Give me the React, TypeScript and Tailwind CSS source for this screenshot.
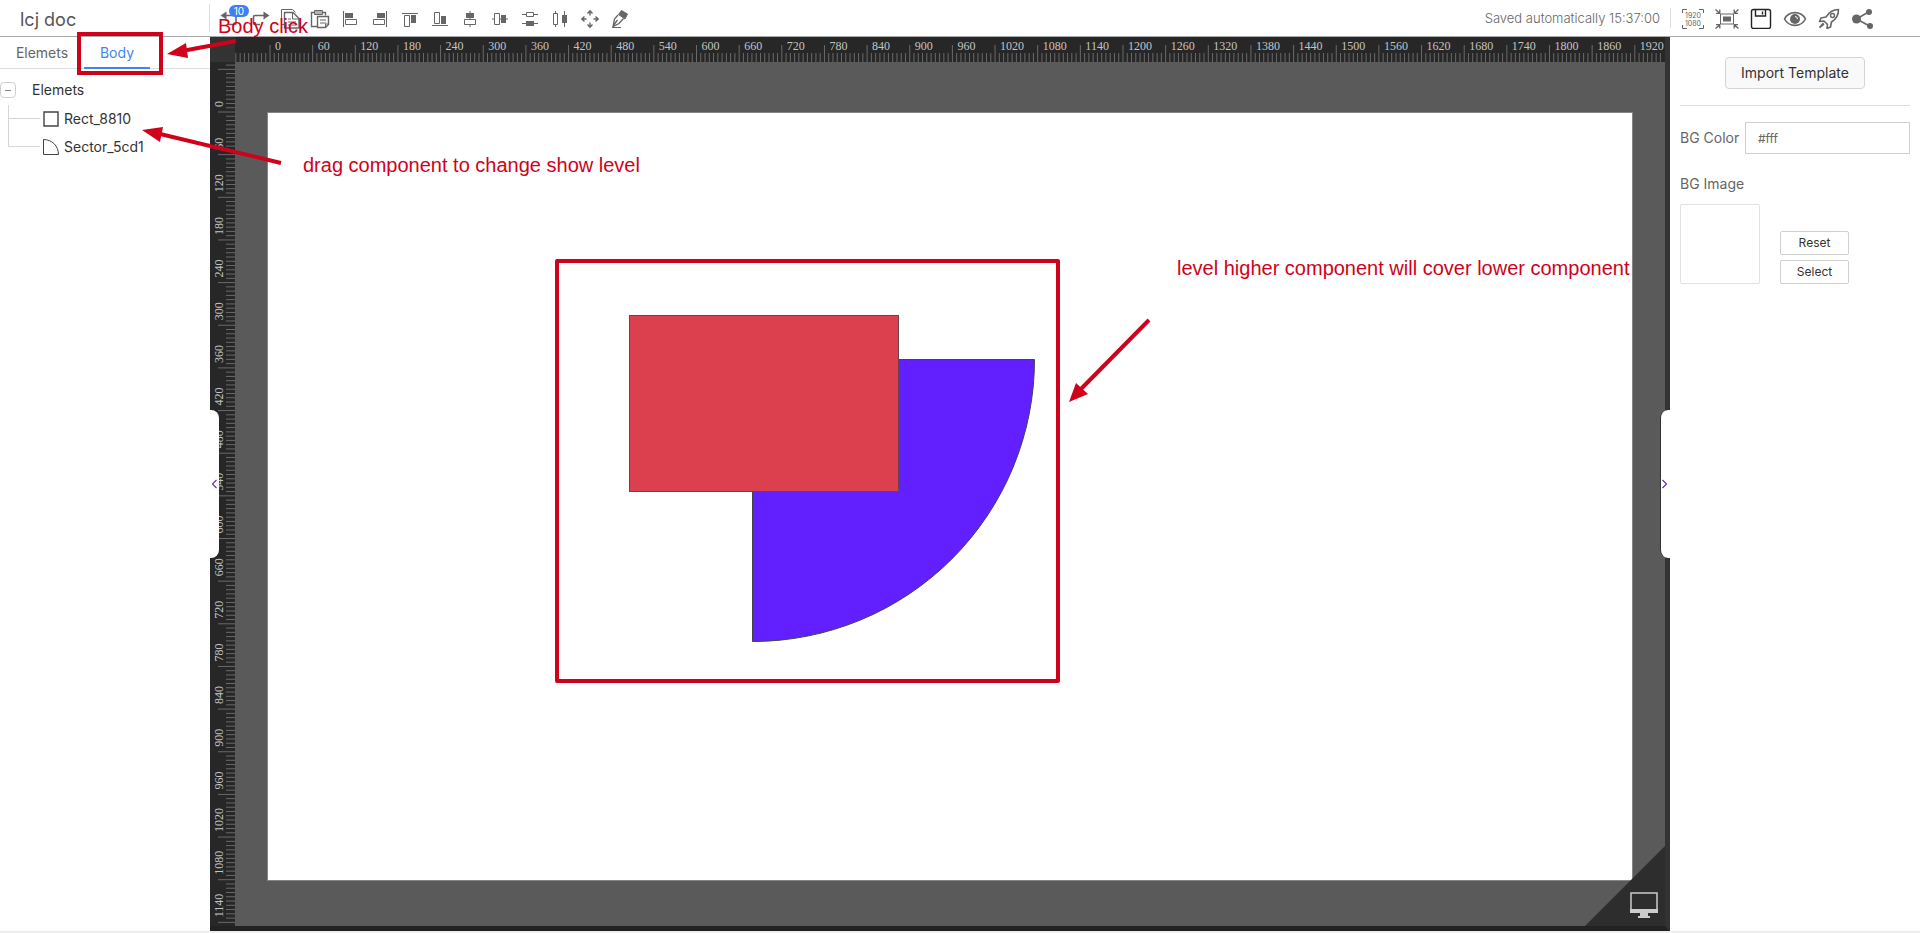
import type { ReactNode } from "react";
import { clsx } from "clsx";

const UNIT = 60;
const STEP = 42.65;

type IconProps = { children: ReactNode };

function Icon({ children }: IconProps) {
  return (
    <svg
      viewBox="0 0 24 24"
      className="w-6 h-6 text-[#666]"
      fill="none"
      stroke="currentColor"
      aria-hidden="true"
    >
      {children}
    </svg>
  );
}

const tools = [
  {
    label: "Undo",
    icon: (
      <>
        <path d="M7 9.500h9.500q1.500 0 1.500 1.500v6q0 1.500-1.500 1.500H10" strokeWidth="1.600" />
        <path d="M8.500 5.500v8L2.500 9.500z" fill="currentColor" stroke="none" />
      </>
    ),
  },
  {
    label: "Redo",
    icon: (
      <>
        <path d="M17 9.500H7Q5.500 9.500 5.500 11v6q0 1.500 1.500 1.500h5" strokeWidth="1.600" />
        <path d="M15.500 5.500v8l6-4z" fill="currentColor" stroke="none" />
      </>
    ),
  },
  {
    label: "Copy",
    icon: (
      <>
        <path d="M6 18.500H3.500V3.500h11l3 3" />
        <path d="M6.500 6.500h8.500l6 6v9.500H6.500z" strokeWidth="1.400" />
        <path d="M14.500 6.500v6.500H21M10 13h3M10 16h8M10 19h8" />
      </>
    ),
  },
  {
    label: "Paste",
    icon: (
      <>
        <path d="M9.500 20.500h-6v-14h3M14.500 6.500h3v3" strokeWidth="1.400" />
        <path d="M6.500 4.500h8v4h-8z" fill="currentColor" fillOpacity="0.500" />
        <path d="M9.500 10.500h11v8l-3 3h-8z" strokeWidth="1.400" />
        <path d="M12 14h6M12 17h6M17.500 21v-3h3" />
      </>
    ),
  },
  {
    label: "Align left",
    icon: (
      <>
        <path d="M5.500 5v16M7.500 13.500h11v5h-11z" />
        <path d="M7 7h8v5H7z" fill="currentColor" stroke="none" />
      </>
    ),
  },
  {
    label: "Align right",
    icon: (
      <>
        <path d="M18.500 5v16M5.500 13.500h11v5h-11z" />
        <path d="M9 7h8v5H9z" fill="currentColor" stroke="none" />
      </>
    ),
  },
  {
    label: "Align top",
    icon: (
      <>
        <path d="M4 7.500h16M6.500 9.500h5v11h-5z" />
        <path d="M13 9h5v8h-5z" fill="currentColor" stroke="none" />
      </>
    ),
  },
  {
    label: "Align bottom",
    icon: (
      <>
        <path d="M4 19.500h16M6.500 6.500h5v11h-5z" />
        <path d="M13 10h5v8h-5z" fill="currentColor" stroke="none" />
      </>
    ),
  },
  {
    label: "Center horizontally",
    icon: (
      <>
        <path d="M12 5v8M12 18v3M6.500 13.500h11v5h-11z" />
        <path d="M8 7h8v5H8z" fill="currentColor" stroke="none" />
      </>
    ),
  },
  {
    label: "Center vertically",
    icon: (
      <>
        <path d="M4 13h2M11 13h9M6.500 7.500h5v11h-5z" />
        <path d="M13 9h5v8h-5z" fill="currentColor" stroke="none" />
      </>
    ),
  },
  {
    label: "Distribute vertically",
    icon: (
      <>
        <path d="M4 8.500h4M16 8.500h4M4 17.500h16M8.500 6.500h7v4h-7z" />
        <path d="M8 15h8v5H8z" fill="currentColor" stroke="none" />
      </>
    ),
  },
  {
    label: "Distribute horizontally",
    icon: (
      <>
        <path d="M7.500 5v2M7.500 19v2M5.500 7.500h4v11h-4zM16.500 5v16" />
        <path d="M14 9h5v8h-5z" fill="currentColor" stroke="none" />
      </>
    ),
  },
  {
    label: "Move",
    icon: (
      <path
        d="M12 5v4.500M12 16.500V21M4 13h4.500M15.500 13H20M9.500 7.500L12 4.800l2.500 2.700M9.500 18.500l2.500 2.700 2.500-2.700M6.500 10.500L3.800 13l2.700 2.500M17.500 10.500l2.700 2.500-2.700 2.500"
        strokeWidth="1.400"
      />
    ),
  },
  {
    label: "Format painter",
    icon: (
      <>
        <path d="M13.500 4.500l6 3.500-2.500 5-6.500-4.500z" fill="currentColor" />
        <path d="M10 9l-3.500 4-1.500 7.500 6-3 4.500-5M5 20l4.500-6" strokeWidth="1.300" />
        <path d="M4 21.500h9" />
      </>
    ),
  },
];

const actions = [
  {
    label: "Actual size",
    icon: (
      <>
        <path d="M1.500 8V4.500H6M18 4.500h4.500V8M1.500 20v3.500H6M18 23.500h4.500V20" />
        <text
          x="12"
          y="13"
          textAnchor="middle"
          fontSize="7"
          fill="currentColor"
          stroke="none"
        >
          1920
        </text>
        <text
          x="12"
          y="21"
          textAnchor="middle"
          fontSize="7"
          fill="currentColor"
          stroke="none"
        >
          1080
        </text>
      </>
    ),
  },
  {
    label: "Fit screen",
    icon: (
      <>
        <path d="M5.500 9h13v10h-13z" />
        <path d="M8 11.500h8v5H8z" fill="currentColor" stroke="none" />
        <path
          d="M.5 4.500l4 3.500M23.500 4.500l-4 3.500M.5 23.500l4-3.500M23.500 23.500l-4-3.500M4.800 4.500v3.800H1M19.200 4.500v3.800H23M4.800 23.500v-3.800H1M19.200 23.500v-3.800H23"
          strokeWidth="1.300"
        />
      </>
    ),
  },
  {
    label: "Save",
    icon: (
      <>
        <rect
          x="2.500"
          y="4.500"
          width="19"
          height="19"
          rx="2"
          className="text-[#222]"
          stroke="currentColor"
          strokeWidth="1.400"
        />
        <path
          d="M6.500 4.500v6.500h10V4.500M13.500 6.500v3"
          className="text-[#222]"
          stroke="currentColor"
          strokeWidth="1.400"
        />
      </>
    ),
  },
  {
    label: "Preview",
    icon: (
      <>
        <path d="M1.500 14C6 5.500 18 5.500 22.500 14 18 22.500 6 22.500 1.500 14z" strokeWidth="1.600" />
        <circle cx="12" cy="14" r="5" fill="currentColor" stroke="none" />
        <path d="M12 11.500a2.500 2.500 0 012.500 2.500" stroke="#fff" />
      </>
    ),
  },
  {
    label: "Publish",
    icon: (
      <>
        <path
          d="M21.500 4.500c-6 .2-9.500 2.500-12.500 7.500l-5 1-1.500 3.500 4.500-.5 3.500 3.500-.5 4 3.500-1.500 1-5c5-3 7-7 7-12.500z"
          strokeWidth="1.600"
          strokeLinejoin="round"
        />
        <circle cx="15.500" cy="10.500" r="2" strokeWidth="1.400" />
        <path d="M6.500 18l-4 4.500 4.500-3.500" strokeWidth="1.600" />
      </>
    ),
  },
  {
    label: "Share",
    icon: (
      <>
        <path d="M17.500 7L5.500 14l13 7" strokeWidth="1.600" />
        <circle cx="5.500" cy="14" r="4.500" fill="currentColor" stroke="none" />
        <circle cx="18" cy="7" r="3" fill="currentColor" stroke="none" />
        <circle cx="19" cy="21" r="3" fill="currentColor" stroke="none" />
      </>
    ),
  },
];

function Header() {
  return (
    <header className="flex h-[37px] shrink-0 items-center border-b border-[#aaa] bg-white">
      <h1 className="flex h-7 w-[210px] items-center border-r border-[#ddd] pl-5 pt-1 text-lg text-[#555]">
        lcj doc
      </h1>
      <div className="flex pl-[5px]">
        {tools.map((tool) => (
          <button
            key={tool.label}
            aria-label={tool.label}
            className="relative flex w-[30px] justify-center"
          >
            <Icon>{tool.icon}</Icon>
            {tool.label === "Undo" && (
              <span className="absolute -top-px left-3.5 flex h-3 w-5 items-center justify-center rounded-full bg-[#3f7ff5] text-[10px] text-white">
                10
              </span>
            )}
          </button>
        ))}
      </div>
      <div className="ml-auto flex items-center">
        <span className="pr-2.5 pt-0.5 text-[13px] font-light text-[#666]">
          Saved automatically 15:37:00
        </span>
        <div className="flex h-5 w-[250px] items-center border-l border-[#ddd] pl-[5px]">
          {actions.map((action) => (
            <button
              key={action.label}
              aria-label={action.label}
              className="flex w-[34px] justify-center pb-0.5"
            >
              <Icon>{action.icon}</Icon>
            </button>
          ))}
        </div>
      </div>
    </header>
  );
}

type TreeItemProps = { label: string; last?: boolean; children: ReactNode };

function TreeItem({ label, last, children }: TreeItemProps) {
  return (
    <li className="flex h-7 items-center">
      <span
        className={clsx(
          "ml-2 w-8 border-l border-[#d5d5d5]",
          last ? "h-3.5 self-start border-b" : "h-7"
        )}
      >
        {!last && <span className="block h-3.5 border-b border-[#d5d5d5]" />}
      </span>
      <svg
        viewBox="0 0 18 18"
        className="ml-0.5 h-[18px] w-[18px]"
        fill="none"
        stroke="#444"
        aria-hidden="true"
      >
        {children}
      </svg>
      <span className="ml-1">{label}</span>
    </li>
  );
}

function ElementPanel() {
  return (
    <aside className="w-[210px] shrink-0 bg-white text-sm text-[#333]">
      <div role="tablist" className="flex h-8 border-b border-[#ddd] text-[#666]">
        <button role="tab" aria-selected="false" className="w-[84px]">
          Elemets
        </button>
        <button
          role="tab"
          aria-selected="true"
          className="-mb-px w-[66px] border-b-2 border-[#3f84f0] pt-px text-[#3f84f0]"
        >
          Body
        </button>
      </div>
      <div className="pt-[7px]">
        <div className="flex h-7 items-center">
          <button
            aria-label="Collapse"
            className="flex h-4 w-4 items-center justify-center rounded-sm border border-[#d0d0d0]"
          >
            <span className="h-px w-1.5 bg-[#888]" />
          </button>
          <span className="ml-4">Elemets</span>
        </div>
        <ul className="pt-px">
          <TreeItem label="Rect_8810">
            <path d="M2 2h14v14H2z" strokeWidth="1.400" />
          </TreeItem>
          <TreeItem label="Sector_5cd1" last>
            <path d="M1.500 1.500v15h15C16.500 8 10 1.500 1.500 1.500z" />
          </TreeItem>
        </ul>
      </div>
    </aside>
  );
}

function range(from: number, to: number) {
  return Array.from({ length: to - from + 1 }, (_, i) => from + i);
}

// tick 0 sits at `origin` px from the start of the ruler
function TopRuler() {
  const origin = 35;
  return (
    <svg
      className="h-[25px] w-full bg-[#272727] font-['Liberation_Serif',serif] text-xs"
      aria-hidden="true"
    >
      {range(-8, 326).map((i) => {
        const major = i % 10 === 0;
        const x = origin + (i * STEP) / 10;
        return <line key={i} x1={x} x2={x} y1={major ? 8 : 16} y2="25" stroke="#6a6a6a" />;
      })}
      {range(0, 32).map((i) => (
        <text key={i} x={origin + i * STEP + 5} y="13" fill="#c4c4c4">
          {i * UNIT}
        </text>
      ))}
    </svg>
  );
}

function LeftRuler() {
  const origin = 50;
  return (
    <svg
      className="h-full w-[25px] bg-[#272727] font-['Liberation_Serif',serif] text-xs"
      aria-hidden="true"
    >
      {range(-11, 202).map((i) => {
        const major = i % 10 === 0;
        const y = origin + (i * STEP) / 10;
        return <line key={i} x1={major ? 8 : 16} x2="25" y1={y} y2={y} stroke="#6a6a6a" />;
      })}
      {range(0, 19).map((i) => (
        <text
          key={i}
          transform={`translate(13 ${origin + i * STEP - 5}) rotate(-90)`}
          fill="#c4c4c4"
        >
          {i * UNIT}
        </text>
      ))}
    </svg>
  );
}

function Stage() {
  return (
    <main className="relative grid min-w-0 flex-1 grid-cols-[25px_1fr] grid-rows-[25px_1fr] border-b-[5px] border-r-[5px] border-b-[#222] border-r-[#333]">
      <div className="bg-[#333]" />
      <TopRuler />
      <div className="min-h-0 overflow-hidden">
        <LeftRuler />
      </div>
      <div className="relative flex min-h-0 bg-[#5a5a5a] px-8 pb-[45px] pt-[50px]">
        <div className="relative flex-1 overflow-hidden border border-[#858585] bg-white">
          <svg className="absolute left-0 top-0 h-full w-full" fill="none" aria-label="Artboard">
            <path d="M484.500 246.500h282a282 282 0 01-282 282z" fill="#621fff" stroke="#444" />
            <rect
              x="361.500"
              y="202.500"
              width="269"
              height="176"
              fill="#dc3f4d"
              stroke="#6b4348"
            />
          </svg>
        </div>
        <button
          aria-label="Display settings"
          className="absolute bottom-0 right-0 h-20 w-20"
        >
          <svg viewBox="0 0 80 80" className="h-20 w-20" aria-hidden="true">
            <path d="M80 0v80H0z" fill="#2d2d2d" />
            <path d="M46 47h26v18H46z" fill="none" stroke="#ccc" strokeWidth="1.500" />
            <path d="M45 63h28v4H45zM55 67h8v3h2v2H53v-2h2z" fill="#ccc" />
          </svg>
        </button>
      </div>
      <button
        aria-label="Collapse left panel"
        className="absolute left-0 top-[373px] flex h-[148px] w-[9px] items-center rounded-r-lg bg-white"
      >
        <svg
          viewBox="0 0 9 10"
          className="h-2.5 w-[9px]"
          fill="none"
          stroke="#6a2fa8"
          aria-hidden="true"
        >
          <path d="M6.500 1L2.500 5l4 4" strokeWidth="1.200" />
        </svg>
      </button>
      <button
        aria-label="Collapse right panel"
        className="absolute -right-[5px] top-[373px] flex h-[148px] w-2.5 items-center rounded-l-lg border-l border-[#333] bg-white"
      >
        <svg
          viewBox="0 0 9 10"
          className="h-2.5 w-[9px]"
          fill="none"
          stroke="#6a2fa8"
          aria-hidden="true"
        >
          <path d="M1.500 1l4 4-4 4" strokeWidth="1.200" />
        </svg>
      </button>
    </main>
  );
}

function PropertyPanel() {
  return (
    <aside className="w-[250px] shrink-0 bg-white px-2.5 pt-5 text-sm text-[#666]">
      <div className="flex justify-center border-b border-[#ddd] pb-4">
        <button className="h-8 w-[140px] rounded border border-[#d5d5d5] bg-[#f9f9f9] text-[#333]">
          Import Template
        </button>
      </div>
      <div className="mt-4 flex items-center justify-between">
        <label htmlFor="bg-color">BG Color</label>
        <input
          id="bg-color"
          defaultValue="#fff"
          className="h-8 w-[165px] border border-[#d0d0d0] px-3 text-xs"
        />
      </div>
      <div className="mt-5 leading-5">BG Image</div>
      <div className="mt-2.5 flex items-end gap-5">
        <div className="h-20 w-20 rounded-xs border border-[#e2e2e2]" />
        <div className="flex flex-col gap-[5px] text-xs text-[#333]">
          <button className="h-6 w-[69px] rounded-xs border border-[#d0d0d0]">Reset</button>
          <button className="h-6 w-[69px] rounded-xs border border-[#d0d0d0]">Select</button>
        </div>
      </div>
    </aside>
  );
}

// red call-outs drawn over the editor
function Annotations() {
  return (
    <div className="pointer-events-none absolute inset-0 font-['Liberation_Sans',sans-serif] text-xl leading-6 text-[#d0021b]">
      <svg
        className="h-full w-full"
        fill="none"
        stroke="currentColor"
        strokeWidth="4"
        aria-hidden="true"
      >
        <rect x="79" y="34" width="82" height="39" />
        <rect x="557" y="261" width="501" height="420" strokeLinejoin="round" />
        <path d="M236 41l-54 10M281 163L156 133M1149 320l-70 71" />
        <g fill="currentColor" stroke="none">
          <path d="M167 54l19-11 2 15z" />
          <path d="M142 130l21-3-3 15z" />
          <path d="M1069 402l7-19 12 11z" />
        </g>
      </svg>
      <p className="absolute left-[218px] top-[14px]">Body click</p>
      <p className="absolute left-[303px] top-[153px]">drag component to change show level</p>
      <p className="absolute left-[1177px] top-[256px] whitespace-nowrap">
        level higher component will cover lower component
      </p>
    </div>
  );
}

export default function App() {
  return (
    <div className="relative flex h-screen flex-col overflow-hidden bg-[#eee] pb-0.5 font-[Inter,sans-serif]">
      <Header />
      <div className="flex min-h-0 flex-1">
        <ElementPanel />
        <Stage />
        <PropertyPanel />
      </div>
      <Annotations />
    </div>
  );
}
